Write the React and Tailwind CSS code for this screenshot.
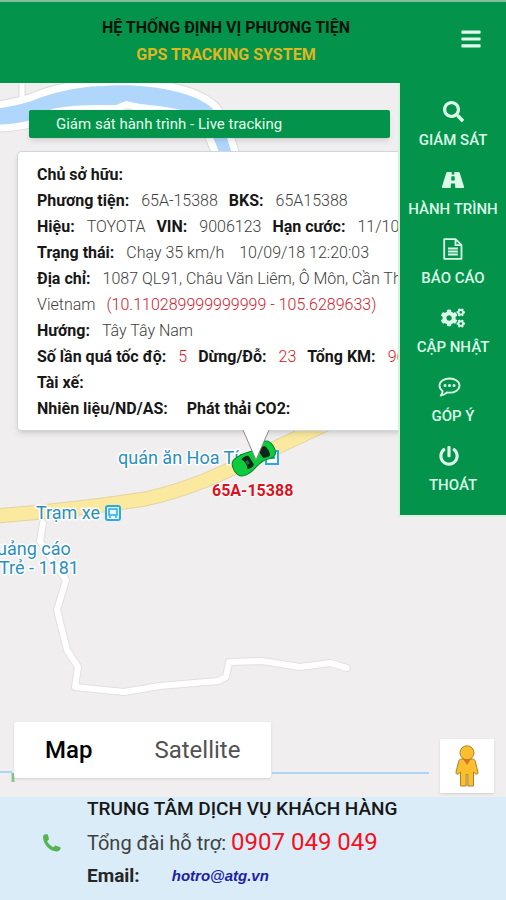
import { useState } from 'react'
import { FaBars, FaCogs, FaPowerOff, FaSearch } from 'react-icons/fa'

const RIVER = 'M-10 110C8 107 22 104 32 101C50 93 76 87 100 86C120 85 136 85 150 87C176 90 200 97 212 108C220 116 227 136 233 158L221 158C217 146 212 132 202 119C190 110 170 107 140 104L126 101 116 105C90 105 70 105 52 109C40 116 34 124 -10 125Z'
const SIDE_ROAD = 'M43 523 40 541 52 560 66 580 57 610 67 650 78 667 75 687 124 692 160 686 218 681 226 677 229 662 262 661 300 667 330 663 347 668'
const MAIN_ROAD = 'M-5 516C50 512 100 506 145 499C210 485 245 460 340 418'

function RoadIcon() {
  return (
    <svg viewBox="0 0 22 18" className="h-[18px] w-[22px]" fill="currentColor">
      <path d="M5.500 1h4.300l-.2 2.400h2.800L12.200 1h4.300c.6 0 1 .3 1.200.8L22 15.400c.3.900 0 1.600-.9 1.600h-7.800l-.3-4.500H9L8.700 17H.9c-.9 0-1.200-.7-.9-1.600L4.300 1.800C4.500 1.300 4.900 1 5.500 1ZM9.500 5.200l-.3 4.400h3.600l-.3-4.400Z" fillRule="evenodd" />
    </svg>
  )
}

function FileIcon() {
  return (
    <svg viewBox="0 0 20 22" className="h-[22px] w-5" fill="none" stroke="currentColor" strokeWidth="1.800">
      <path d="M1.200 1.200h11.300l6 6v13.600H1.200Z" strokeLinejoin="round" />
      <path d="M12.500 1.200v6h6M5 10.500h9.800M5 13.500h9.800M5 16.500h9.800" />
    </svg>
  )
}

function ChatIcon() {
  return (
    <svg viewBox="0 0 24 20" className="h-5 w-6" fill="none" stroke="currentColor" strokeWidth="1.800">
      <path d="M12.500 1.500c5.600 0 10 3.100 10 7.100s-4.400 7.100-10 7.100c-.9 0-1.800-.1-2.600-.2-1.700 1.600-3.800 2.700-6.200 3.100 1.100-1.200 1.800-2.700 2-4.400C3.700 12.900 2.500 10.900 2.500 8.600 2.500 4.600 6.900 1.500 12.500 1.500Z" strokeLinejoin="round" />
      <path d="M8 8.600h.1M12.500 8.600h.1M17 8.600h.1" strokeWidth="3" strokeLinecap="round" />
    </svg>
  )
}

function PhoneIcon() {
  return (
    <svg viewBox="0 0 20 20" className="size-5" fill="#58b352">
      <path d="M3.600 1.200 5 1.300c.6.100 1 .5 1.100 1.100l.8 3.500c.1.600-.1 1.100-.6 1.400l-1.200.8c1.300 2.900 3.600 5 6.600 6.200l1-1.200c.4-.5.9-.6 1.400-.4l3.700 1.300c.6.200.9.700.8 1.300-.2 1.900-1.800 3.200-3.900 3.200C7.500 18.200 1.300 11.600 1 4.300.9 2.600 1.900 1.300 3.600 1.200Z" />
    </svg>
  )
}

function Pegman() {
  return (
    <svg viewBox="0 0 26 42" className="h-[42px] w-[26px]" fill="#fbbf2d" stroke="#a8822c" strokeWidth="1">
      <path d="M7.500 14h11c1.500 0 2.400.8 2.800 2.200l2.700 11c.3 1.400-.8 2.300-2.200 1.800l-2.300-2V41h-5.700V29.500h-1.600V41H6.500V27l-2.300 2c-1.400.5-2.500-.4-2.200-1.800l2.700-11C5.100 14.800 6 14 7.500 14Z" />
      <path d="m9 14 4 6 4-6Z" fill="#e2702a" stroke="none" />
      <circle cx="13" cy="7.800" r="7" />
    </svg>
  )
}

const MENU = [
  { label: 'GIÁM SÁT', icon: <FaSearch size={21} /> },
  { label: 'HÀNH TRÌNH', icon: <RoadIcon /> },
  { label: 'BÁO CÁO', icon: <FileIcon /> },
  { label: 'CẬP NHẬT', icon: <FaCogs size={24} /> },
  { label: 'GÓP Ý', icon: <ChatIcon />, pad: 'pr-2' },
  { label: 'THOÁT', icon: <FaPowerOff size={20} />, pad: 'pr-2' },
]

// each line is a list of [label, value, value colour]
const INFO = [
  [['Chủ sở hữu:']],
  [['Phương tiện:', '65A-15388'], ['BKS:', '65A15388']],
  [['Hiệu:', 'TOYOTA'], ['VIN:', '9006123'], ['Hạn cước:', '11/10/2018']],
  [['Trạng thái:', 'Chạy 35 km/h\u00a0'], [null, '10/09/18 12:20:03']],
  [['Địa chỉ:', '1087 QL91, Châu Văn Liêm, Ô Môn, Cần Thơ,']],
  [[null, 'Vietnam'], [null, '(10.110289999999999 - 105.6289633)', 'red']],
  [['Hướng:', 'Tây Tây Nam']],
  [['Số lần quá tốc độ:', '5', 'red'], ['Dừng/Đỗ:', '23', 'red'], ['Tổng KM:', '96', 'red']],
  [['Tài xế:']],
  [['Nhiên liệu/ND/AS:\u00a0\u00a0'], ['Phát thải CO2:']],
]

function MapCanvas() {
  return (
    <svg viewBox="0 83 506 714" preserveAspectRatio="xMinYMin slice" className="absolute inset-0 h-full w-full" fill="none">
      <rect y="83" width="506" height="714" fill="#f0eeef" />

      {/* river and its banks */}
      <g strokeLinejoin="round">
        <path d={RIVER} stroke="#dddbdc" strokeWidth="16" />
        <path d="M22 80v18" stroke="#dddbdc" strokeWidth="7" />
        <path d="M22 80v22" stroke="#fff" strokeWidth="5" />
        <path d={RIVER} stroke="#fff" strokeWidth="14" />
        <path d={RIVER} fill="#b0d7fb" />
      </g>

      {/* main road */}
      <path d={MAIN_ROAD} stroke="#e3d3a0" strokeWidth="15" />
      <path d={MAIN_ROAD} stroke="#fbe99f" strokeWidth="13" />

      {/* side road */}
      <g strokeLinejoin="round" strokeLinecap="round">
        <path d={SIDE_ROAD} stroke="#e2e0e1" strokeWidth="8" />
        <path d={SIDE_ROAD} stroke="#fff" strokeWidth="6" />
      </g>

      {/* canal at the bottom */}
      <path d="M0 772h12M272 773h157" stroke="#acd5f5" strokeWidth="2" />
      <path d="M13 773v9" stroke="#84c98c" strokeWidth="3" />

      <g fill="#2a8fbd" stroke="#fff" strokeWidth="3" strokeLinejoin="round" paintOrder="stroke" className="font-[Roboto,sans-serif] text-[18px]">
        <text x="118" y="464">quán ăn Hoa Tím</text>
        <text x="36" y="519">Trạm xe</text>
        <text x="-3" y="555">uảng cáo</text>
        <text x="-1" y="574">Trẻ - 1181</text>
      </g>

      {/* bus stop */}
      <rect x="106" y="506" width="14" height="14" rx="2" fill="#e8f7fd" stroke="#29aae2" strokeWidth="2" />
      <path d="M109 509h8v6h-8ZM110 516v2M116 516v2" stroke="#29aae2" strokeWidth="1.500" />
      <rect x="266" y="451" width="12" height="13" fill="#fff" stroke="#29aae2" strokeWidth="2" />
      <path d="M271 458h4" stroke="#29aae2" strokeWidth="2" />

      {/* tracked car, seen from above */}
      <g transform="rotate(-32 253 459)">
        <path d="M240 449c-6 0-9 4-9 10s3 10 9 10c8 1 12-3 20-3 5 0 8 3 12 2 4-1 5-5 5-9s-1-8-5-9c-4-1-7 2-12 2-8 0-12-4-20-3Z" fill="#0ccb3c" stroke="#07812a" strokeWidth="1" />
        <path d="M243 453c3-1 8-1 8 2v8c0 3-5 3-8 2 2-4 2-8 0-12ZM262 455c3-2 7-2 8 0 1 3 1 6 0 9-1 2-5 1-8-1Z" fill="#10261a" />
        <path d="M245 457h3v4h-3Z" fill="#2b6b40" />
      </g>
      <text x="212" y="496" fill="#d9121d" stroke="#fff" strokeWidth="2" paintOrder="stroke" className="font-[Roboto,sans-serif] text-[16px] font-bold">65A-15388</text>
    </svg>
  )
}

function InfoWindow() {
  return (
    <div className="relative mt-[13px] -mr-10 ml-[17px] rounded-sm border border-gray-300 bg-white pt-2.5 pb-2 pl-[19px] shadow-md">
      {INFO.map((line, i) => (
        <p key={i} className="flex gap-[11px] text-[16px] leading-[26px] whitespace-nowrap">
          {line.map(([label, value, color], j) => (
            <span key={j} className="flex gap-3">
              {label && <b className="font-bold text-neutral-900">{label}</b>}
              {value && <span className={color === 'red' ? 'font-light text-[#d0202e]' : 'font-light text-neutral-700'}>{value}</span>}
            </span>
          ))}
        </p>
      ))}
      <svg viewBox="0 0 30 34" className="absolute top-full left-[223px] h-[34px] w-[30px]">
        <path d="M2-1 15 30 28-1Z" fill="#fff" />
        <path d="M2 0 15 30 28 0" fill="none" stroke="#8b8b8b" strokeWidth="1" />
      </svg>
    </div>
  )
}

export default function App() {
  const [mapType, setMapType] = useState('Map')
  const [menuOpen, setMenuOpen] = useState(true)

  return (
    <div className="flex min-h-screen flex-col font-[Roboto,'Noto_Sans',sans-serif]">
      <header className="flex items-center border-t-2 border-[#84bd9f] bg-[#03934b] pt-3 pr-6 pb-[15px] text-[16px] leading-[27px] font-bold">
        <div className="flex-1 pl-2 text-center">
          <h1 className="text-[#07130c]">HỆ THỐNG ĐỊNH VỊ PHƯƠNG TIỆN</h1>
          <p className="text-[#dfb621]">GPS TRACKING SYSTEM</p>
        </div>
        <button aria-label="Menu" onClick={() => setMenuOpen(!menuOpen)} className="pb-1 pl-4 text-[#e2fbec]">
          <FaBars size={22} />
        </button>
      </header>

      <main className="relative flex flex-1 flex-col justify-between overflow-hidden">
        <MapCanvas />

        <div className="relative flex items-start">
          <section className="min-w-0 flex-1 pt-[27px]">
            <h2 className="mr-2 ml-[29px] rounded-xs bg-[#03934b] pl-[27px] text-[15px] leading-7 text-[#e2fbec] shadow-md">
              Giám sát hành trình - Live tracking
            </h2>
            <InfoWindow />
          </section>

          {menuOpen && (
            <nav className="relative flex w-[108px] flex-col gap-[17px] border-b-2 border-l-2 border-[#d5f2e1] bg-[#03934b] pt-[15px] pb-5">
              {MENU.map(({ label, icon, pad }) => (
                <a key={label} href="#" className="flex flex-col items-center gap-1.5 text-[15px] leading-5 font-medium text-[#dcfae8]">
                  <span className={`flex h-[26px] items-center ${pad || ''}`}>{icon}</span>
                  {label}
                </a>
              ))}
            </nav>
          )}
        </div>

        <div className="relative flex items-end justify-between pr-3 pb-1 pl-3.5">
          <div className="mb-[15px] flex rounded-xs bg-white text-[24px] leading-[56px] shadow">
            {['Map', 'Satellite'].map(t => (
              <button key={t} onClick={() => setMapType(t)}
                className={`px-[31px] ${mapType === t ? 'font-medium text-black' : 'text-neutral-600'}`}>
                {t}
              </button>
            ))}
          </div>
          <button aria-label="Street View" className="flex size-[54px] items-center justify-center bg-white shadow">
            <Pegman />
          </button>
        </div>
      </main>

      <footer className="flex items-center gap-[25px] bg-[#d9ecf8] pb-3 pl-[42px]">
        <PhoneIcon />
        <div>
          <p className="text-[19px] leading-6 font-medium text-neutral-900">TRUNG TÂM DỊCH VỤ KHÁCH HÀNG</p>
          <p className="text-[20px] leading-[42px] text-neutral-700">
            Tổng đài hỗ trợ: <a href="tel:0907049049" className="text-[24px] text-[#f5101c]">0907 049 049</a>
          </p>
          <p className="flex items-center gap-8 text-[19px] leading-6">
            <b className="font-bold text-neutral-800">Email:</b>
            <a href="mailto:hotro@atg.vn" className="font-['Liberation_Sans',sans-serif] text-[15px] font-bold text-[#1d1da8] italic">hotro@atg.vn</a>
          </p>
        </div>
      </footer>
    </div>
  )
}
